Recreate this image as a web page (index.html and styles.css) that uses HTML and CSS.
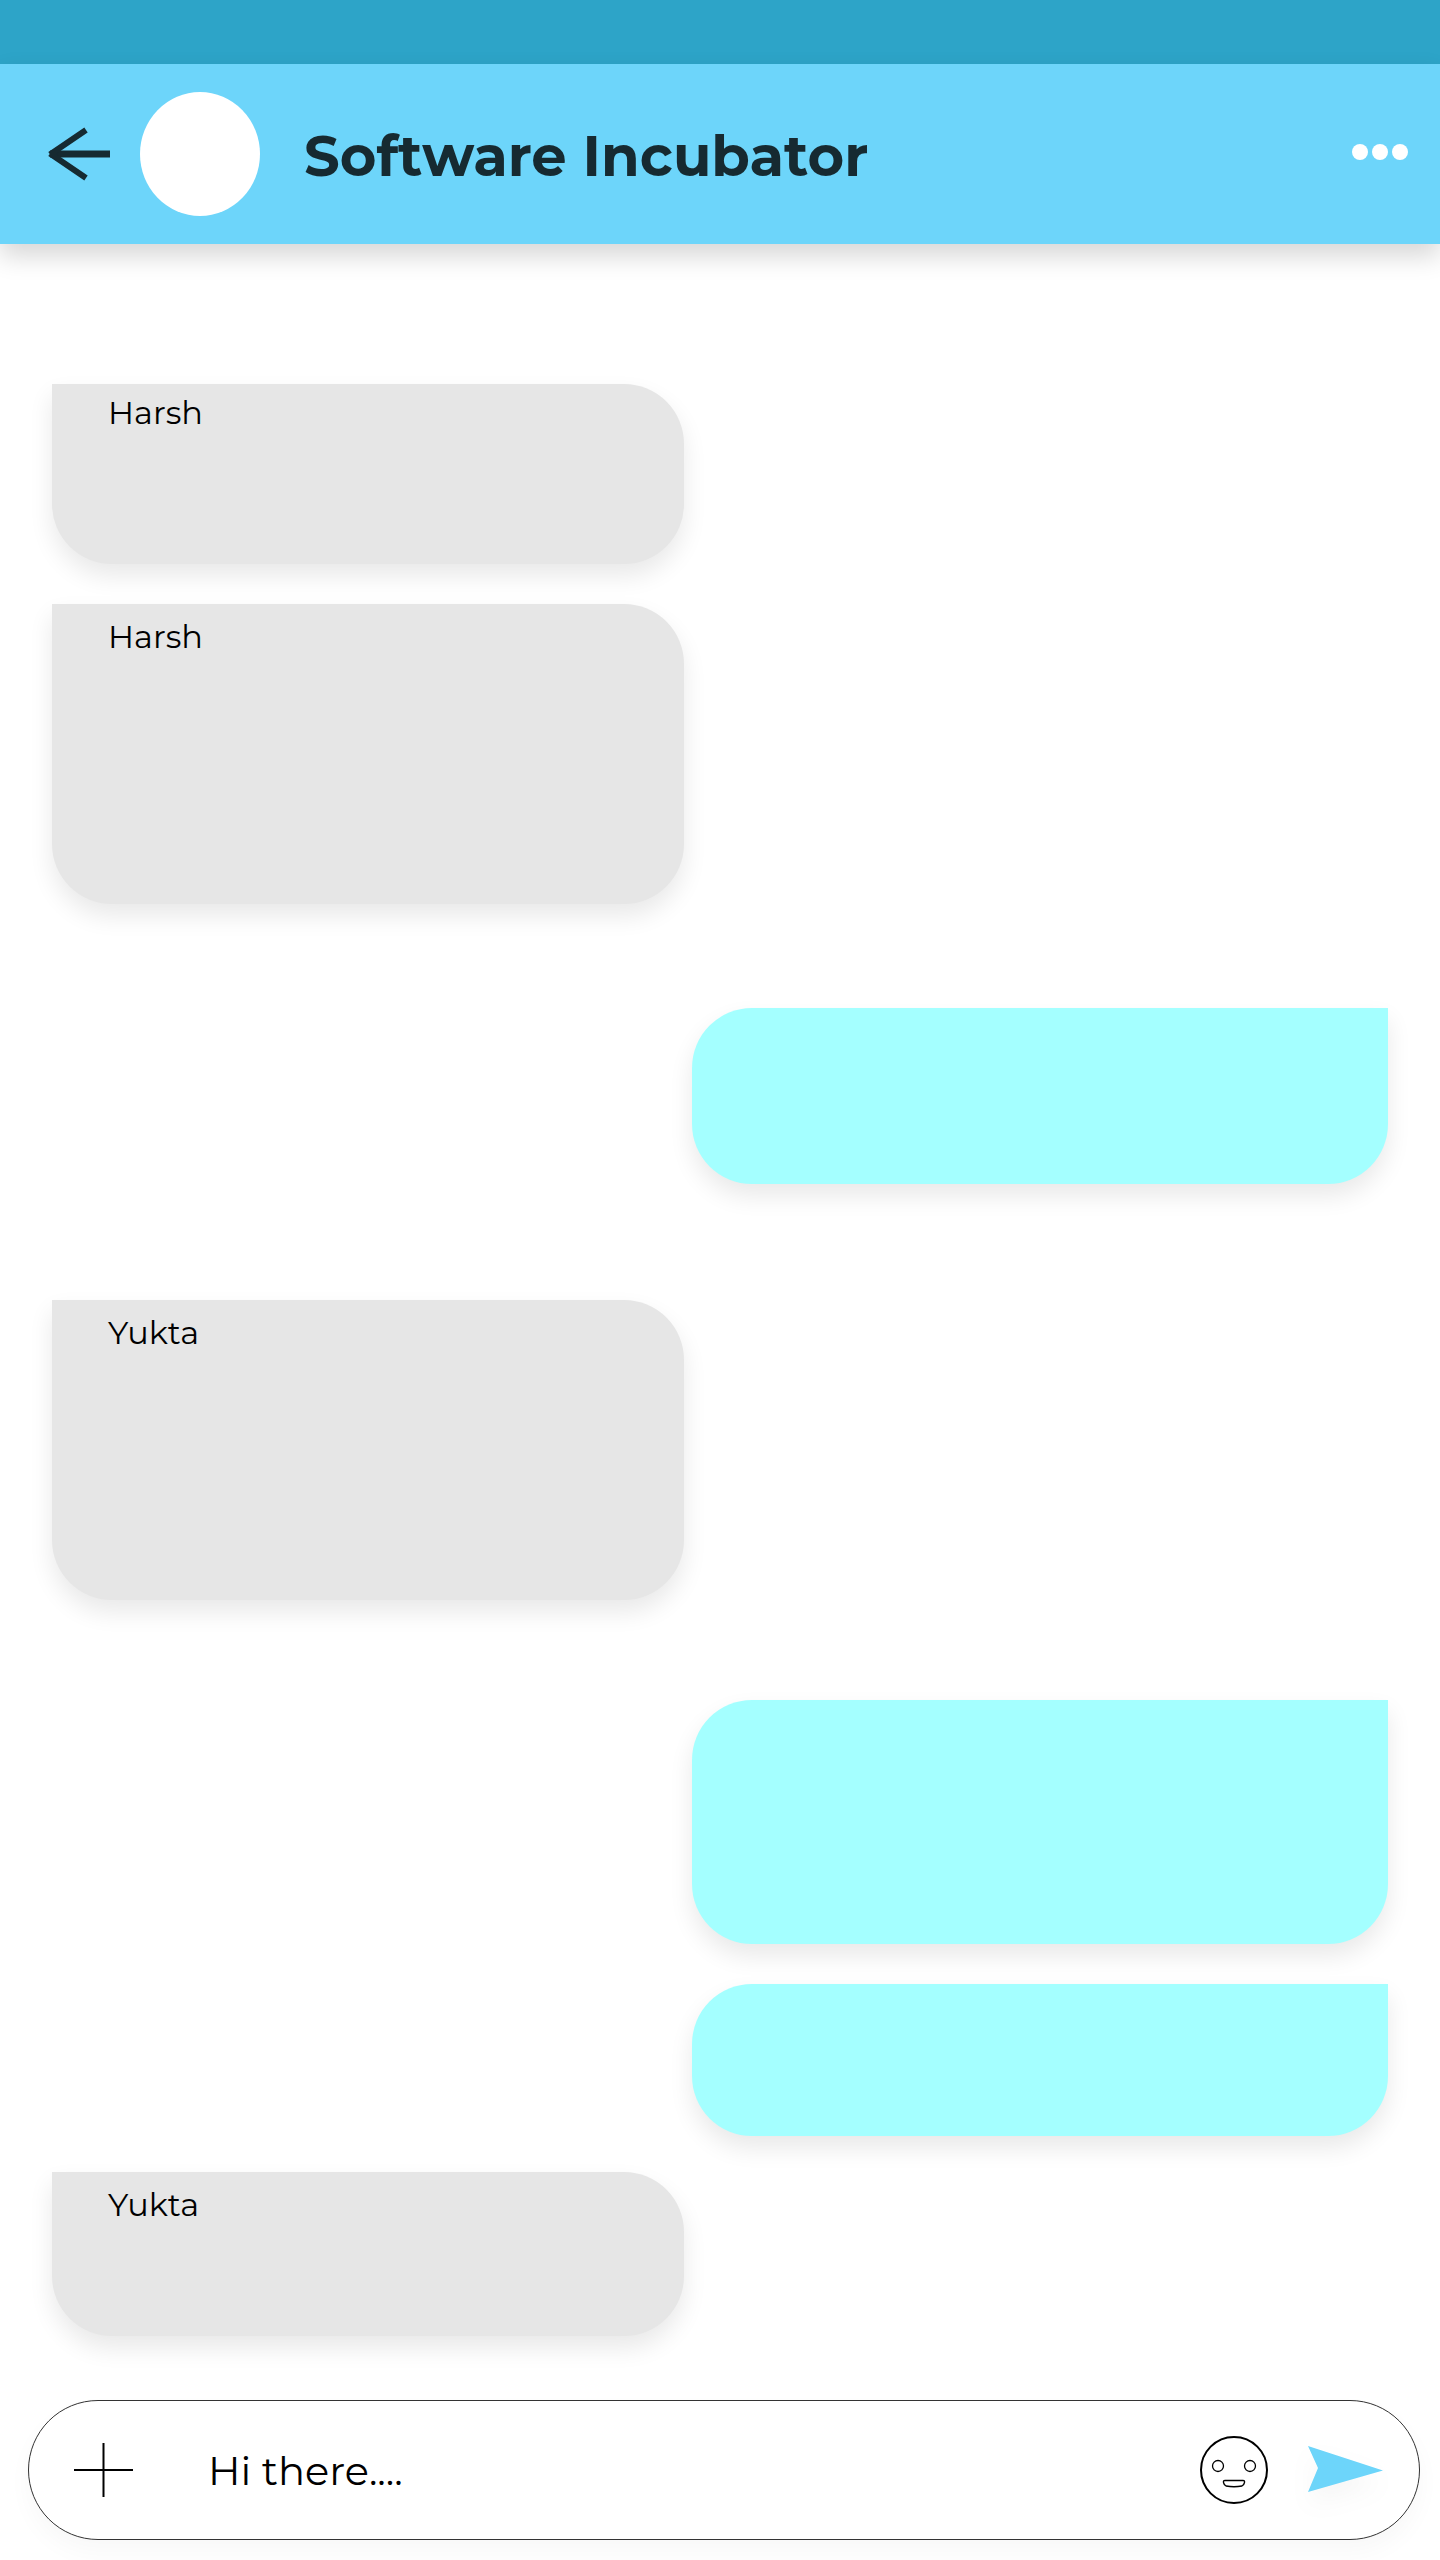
FILE: index.html
```html
<!DOCTYPE html>
<html lang="en">
<head>
  <meta charset="utf-8">
  <meta name="viewport" content="width=device-width, initial-scale=1">
  <title>Software Incubator</title>
  <link rel="stylesheet" href="styles.css">
</head>
<body>
  <div class="chat">
    <div class="status-bar"></div>
    <header class="header">
      <button class="icon-button back" type="button" aria-label="Back">
        <svg width="62" height="56" viewBox="0 0 62 56" fill="none" stroke="#162a31">
          <path d="M2 28H62" stroke-width="7"/>
          <path d="M38 4L2 28.500M38 52L2 27.500" stroke-width="6"/>
        </svg>
      </button>
      <div class="avatar"></div>
      <h1 class="title">Software Incubator</h1>
      <button class="icon-button" type="button" aria-label="More options">
        <svg width="56" height="20" viewBox="0 0 56 20" fill="#fff">
          <circle cx="8" cy="8" r="8"/>
          <circle cx="28" cy="8" r="8"/>
          <circle cx="48" cy="8" r="8"/>
        </svg>
      </button>
    </header>

    <main class="messages">
      <article class="bubble received compact"><h2 class="sender">Harsh</h2></article>
      <article class="bubble received long follows"><h2 class="sender">Harsh</h2></article>
      <article class="bubble sent medium"></article>
      <article class="bubble received long new-topic"><h2 class="sender">Yukta</h2></article>
      <article class="bubble sent tall"></article>
      <article class="bubble sent small follows"></article>
      <article class="bubble received short replies"><h2 class="sender">Yukta</h2></article>
    </main>

    <form class="composer">
      <button class="icon-button" type="button" aria-label="Add attachment">
        <svg width="60" height="56" viewBox="0 0 60 56" fill="none" stroke="#000" stroke-width="2">
          <path d="M0 28H59M29.500 1V55"/>
        </svg>
      </button>
      <input class="composer-input" type="text" aria-label="Message" value="Hi there....">
      <button class="icon-button" type="button" aria-label="Insert emoji">
        <svg width="68" height="68" viewBox="0 0 68 68" fill="none" stroke="#000">
          <circle cx="34" cy="34" r="33" stroke-width="2"/>
          <circle cx="18" cy="30" r="5.500" stroke-width="1.300"/>
          <circle cx="50" cy="30" r="5.500" stroke-width="1.300"/>
          <path stroke-width="1.300" d="M25 44.500H43Q45 44.500 44.500 46.500Q44 49 42 50Q34 51.500 26 50Q24 49 23.500 46.500Q23 44.500 25 44.500Z"/>
        </svg>
      </button>
      <button class="icon-button send" type="submit" aria-label="Send">
        <svg width="76" height="48" viewBox="0 0 76 48" fill="#6dd5fa">
          <path d="M0 0L75 24.500L0 46L10 22Z"/>
        </svg>
      </button>
    </form>
  </div>
</body>
</html>
```
FILE: styles.css
```css
* {
  box-sizing: border-box;
}

body {
  margin: 0;
  background: #fff;
  color: #000;
  font-family: Montserrat, Inter, "Open Sans", sans-serif;
}

.chat {
  display: flex;
  flex-direction: column;
  min-height: 100vh;
}

.status-bar {
  height: 64px;
  background: #2da4c8;
}

.header {
  display: flex;
  align-items: center;
  height: 180px;
  padding: 0 32px 0 48px;
  background: #6dd5fa;
  box-shadow: 0 12px 24px rgba(0, 0, 0, 0.16);
}

.icon-button {
  display: flex;
  flex: none;
  padding: 0;
  border: 0;
  background: none;
  cursor: pointer;
}

.icon-button svg {
  overflow: visible;
}

.back {
  margin-right: 30px;
}

.avatar {
  flex: none;
  width: 120px;
  height: 124px;
  border-radius: 50%;
  background: #fff;
}

.title {
  flex: 1;
  margin: 0 0 0 44px;
  padding-top: 4px;
  color: #162a31;
  font-size: 56px;
  font-weight: 700;
  line-height: 68px;
}

.messages {
  display: flex;
  flex: 1;
  flex-direction: column;
  padding: 36px 52px 64px;
}

.bubble {
  margin-top: 104px;
  padding: 12px 56px;
  box-shadow: 0 12px 24px rgba(0, 0, 0, 0.09);
}

.received {
  align-self: flex-start;
  width: 47.3%;
  border-radius: 0 60px 60px 60px;
  background: #e6e6e6;
}

.sent {
  align-self: flex-end;
  width: 52.1%;
  border-radius: 60px 0 60px 60px;
  background: #a4ffff;
}

.compact {
  min-height: 180px;
  padding-top: 8px;
}

.short {
  min-height: 164px;
}

.small {
  min-height: 152px;
}

.medium {
  min-height: 176px;
}

.tall {
  min-height: 244px;
}

.long {
  min-height: 300px;
}

.follows {
  margin-top: 40px;
}

.replies {
  margin-top: 36px;
}

.new-topic {
  margin-top: 116px;
}

.tall {
  margin-top: 100px;
}

.sender {
  margin: 0;
  font-size: 32px;
  font-weight: 400;
  line-height: 42px;
}

.composer {
  display: flex;
  align-items: center;
  height: 140px;
  margin: 0 20px 20px 28px;
  padding: 0 35px 0 45px;
  border: 1px solid #333;
  border-radius: 70px;
  background: #fff;
  box-shadow: 0 12px 24px rgba(0, 0, 0, 0.03);
}

.composer-input {
  flex: 1;
  min-width: 0;
  height: 64px;
  margin: 0 24px 0 74px;
  padding: 0;
  border: 0;
  outline: 0;
  background: none;
  color: #000;
  font: inherit;
  font-size: 40px;
  font-weight: 400;
}

.send {
  margin-left: 40px;
}

.send svg {
  filter: drop-shadow(0 12px 12px rgba(0, 0, 0, 0.04));
}
```
